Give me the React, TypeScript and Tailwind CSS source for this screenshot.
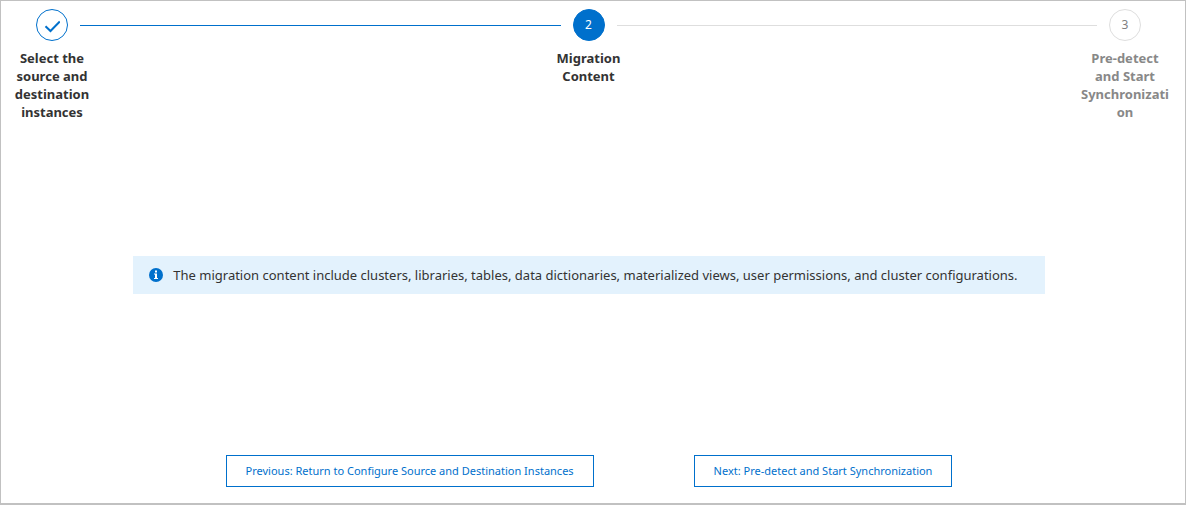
import { Fragment } from 'react'
import clsx from 'clsx'

type StepStatus = 'done' | 'current' | 'pending'

interface Step {
  label: string
  status: StepStatus
}

const steps: Step[] = [
  { label: 'Select the source and destination instances', status: 'done' },
  { label: 'Migration Content', status: 'current' },
  { label: 'Pre-detect and Start Synchronization', status: 'pending' },
]

function CheckIcon() {
  return (
    <svg viewBox="0 0 16 16" className="w-4 h-4" fill="none" stroke="currentColor" strokeWidth="2" aria-hidden="true">
      <path d="M1.500 9.200 6.500 14 15.800 4.500" />
    </svg>
  )
}

function InfoIcon() {
  return (
    <svg viewBox="0 0 14 14" className="w-3.5 h-3.5 shrink-0 text-[#0070cc]" aria-hidden="true">
      <circle cx="7" cy="7" r="7" fill="currentColor" />
      <path d="M6 2.5h2v2H6zM5 5.5h3v4.500h1V11H5v-1h1V6.500H5z" fill="#fff" />
    </svg>
  )
}

function StepItem({ step, index }: { step: Step; index: number }) {
  return (
    <li className="flex w-[90px] shrink-0 flex-col items-center" aria-current={step.status === 'current' ? 'step' : undefined}>
      <span
        className={clsx(
          'flex h-8 w-8 items-center justify-center rounded-full border text-xs',
          step.status === 'done' && 'border-[#0070cc] text-[#0070cc]',
          step.status === 'current' && 'border-[#0070cc] bg-[#0070cc] text-white',
          step.status === 'pending' && 'border-[#dedede] text-[#808080]'
        )}
      >
        {step.status === 'done' ? <CheckIcon /> : index + 1}
      </span>
      <span
        className={clsx(
          'mt-2 w-full text-center text-[13px] leading-[18px] font-bold wrap-break-word',
          step.status === 'pending' ? 'text-[#888]' : 'text-[#333]'
        )}
      >
        {step.label}
      </span>
    </li>
  )
}

export default function App() {
  return (
    <main className="flex min-h-screen flex-col border border-b-2 border-[#c1c1c1] bg-white pt-2 pr-2 pb-4 font-['Noto_Sans',sans-serif] text-[#333]">
      <ol className="flex items-start pr-[7px] pl-1.5">
        {steps.map((step, i) => (
          <Fragment key={step.label}>
            {i > 0 && (
              <li
                aria-hidden="true"
                className={clsx(
                  '-mx-[17px] mt-4 h-px flex-1',
                  step.status === 'pending' ? 'bg-[#dedede]' : 'bg-[#0070cc]'
                )}
              />
            )}
            <StepItem step={step} index={i} />
          </Fragment>
        ))}
      </ol>

      <div className="mx-auto mt-[135px] flex w-[77.5%] items-center gap-2.5 bg-[#e3f2fd] px-4 py-2.5">
        <InfoIcon />
        <p className="text-[13px] leading-[18px]">
          The migration content include clusters, libraries, tables, data dictionaries, materialized views, user
          permissions, and cluster configurations.
        </p>
      </div>

      <div className="mt-auto flex justify-center gap-[100px]">
        <button type="button" className="h-8 border border-[#0070cc] px-[19px] text-[11px] text-[#0070cc]">
          Previous: Return to Configure Source and Destination Instances
        </button>
        <button type="button" className="h-8 border border-[#0070cc] px-[19px] text-[11px] text-[#0070cc]">
          Next: Pre-detect and Start Synchronization
        </button>
      </div>
    </main>
  )
}
